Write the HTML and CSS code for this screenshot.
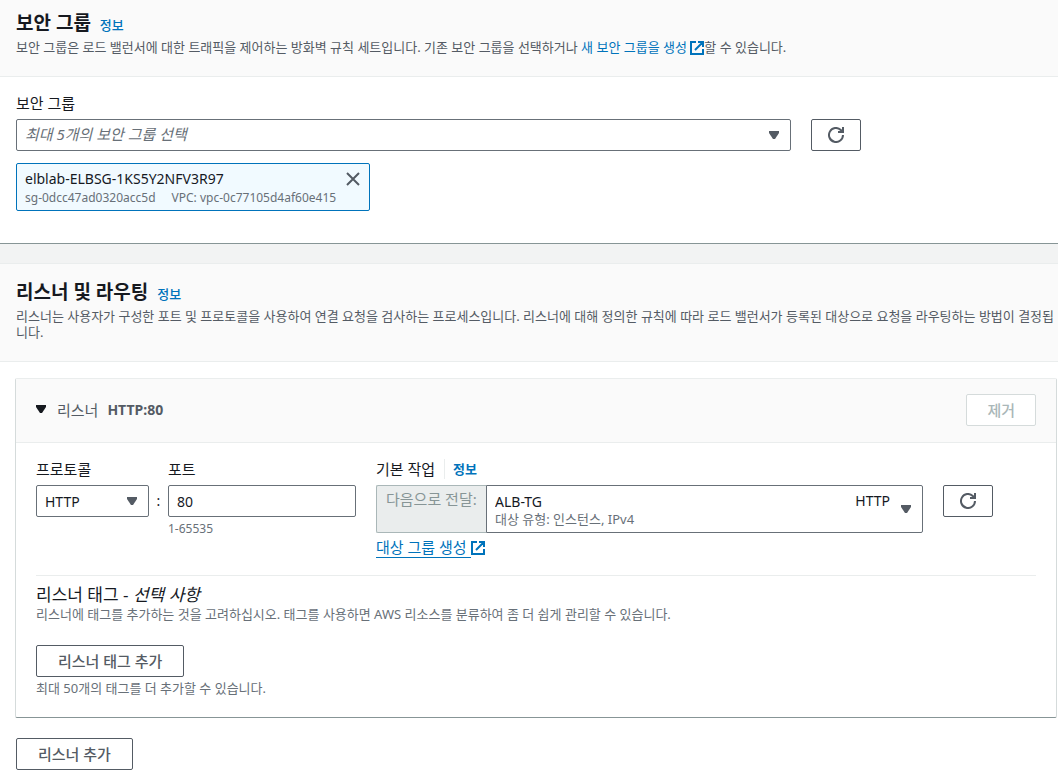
FILE: index.html
```html
<!DOCTYPE html>
<html lang="ko">
<head>
    <meta charset="UTF-8">
    <meta name="viewport" content="width=device-width, initial-scale=1.0">
    <title>로드 밸런서 생성</title>
    <link rel="stylesheet" href="styles.css">
</head>
<body>
    <!-- shared icons -->
    <svg class="sprite" aria-hidden="true">
        <symbol id="icon-caret" viewBox="0 0 10 8">
            <path d="M0 0h10v2L6 8H4L0 2z" fill="currentColor"/>
        </symbol>
        <symbol id="icon-refresh" viewBox="0 0 16 16">
            <path d="M15 8a7 7 0 1 1-2.2-5.1L15 5" fill="none" stroke="currentColor" stroke-width="2"/>
            <path d="M15 0v5h-5" fill="none" stroke="currentColor" stroke-width="2"/>
        </symbol>
        <symbol id="icon-external" viewBox="0 0 14 14">
            <path d="M6 1H1v12h12V8M8 1h5v5M13 1L5 9" fill="none" stroke="currentColor" stroke-width="2"/>
        </symbol>
        <symbol id="icon-close" viewBox="0 0 14 14">
            <path d="M1 1l12 12M13 1L1 13" fill="none" stroke="currentColor" stroke-width="2"/>
        </symbol>
    </svg>

    <section class="panel">
        <header class="panel-header">
            <h2>보안 그룹 <a href="#" class="info">정보</a></h2>
            <p>보안 그룹은 로드 밸런서에 대한 트래픽을 제어하는 방화벽 규칙 세트입니다. 기존 보안 그룹을 선택하거나 <a href="#">새 보안 그룹을 생성 <svg class="external"><use href="#icon-external"/></svg></a>할 수 있습니다.</p>
        </header>
        <div class="panel-body">
            <label for="security-group">보안 그룹</label>
            <div class="group-row">
                <div class="select">
                    <select id="security-group" class="placeholder">
                        <option>최대 5개의 보안 그룹 선택</option>
                    </select>
                    <svg class="caret"><use href="#icon-caret"/></svg>
                </div>
                <button type="button" class="btn btn-icon" aria-label="새로 고침"><svg><use href="#icon-refresh"/></svg></button>
            </div>
            <div class="token">
                <div>
                    <div class="token-name">elblab-ELBSG-1KS5Y2NFV3R97</div>
                    <div class="token-meta"><span>sg-0dcc47ad0320acc5d</span><span>VPC: vpc-0c77105d4af60e415</span></div>
                </div>
                <button type="button" class="token-close" aria-label="삭제"><svg><use href="#icon-close"/></svg></button>
            </div>
        </div>
    </section>

    <section class="panel panel-listeners">
        <header class="panel-header">
            <h2>리스너 및 라우팅 <a href="#" class="info">정보</a></h2>
            <p>리스너는 사용자가 구성한 포트 및 프로토콜을 사용하여 연결 요청을 검사하는 프로세스입니다. 리스너에 대해 정의한 규칙에 따라 로드 밸런서가 등록된 대상으로 요청을 라우팅하는 방법이 결정됩니다.</p>
        </header>

        <div class="listener">
            <div class="listener-header">
                <button type="button" class="toggle" aria-expanded="true">
                    <svg class="caret"><use href="#icon-caret"/></svg>
                    <span>리스너</span>
                    <strong>HTTP:80</strong>
                </button>
                <button type="button" class="btn" disabled>제거</button>
            </div>
            <div class="listener-body">
                <div class="fields">
                    <div class="field-protocol">
                        <label for="protocol">프로토콜</label>
                        <div class="select">
                            <select id="protocol">
                                <option>HTTP</option>
                            </select>
                            <svg class="caret"><use href="#icon-caret"/></svg>
                        </div>
                    </div>
                    <span class="colon">:</span>
                    <div class="field-port">
                        <label for="port">포트</label>
                        <input type="text" id="port" value="80">
                        <p class="hint">1-65535</p>
                    </div>
                    <div class="field-action">
                        <div class="label-row">
                            <label for="target-group">기본 작업</label>
                            <a href="#" class="info">정보</a>
                        </div>
                        <div class="forward">
                            <span class="forward-label">다음으로 전달:</span>
                            <div class="select select-target">
                                <select id="target-group">
                                    <option>ALB-TG</option>
                                </select>
                                <span class="target-type">대상 유형: 인스턴스, IPv4</span>
                                <span class="target-protocol">HTTP</span>
                                <svg class="caret"><use href="#icon-caret"/></svg>
                            </div>
                        </div>
                        <a href="#" class="create-link"><span>대상 그룹 생성&nbsp;</span><svg class="external"><use href="#icon-external"/></svg></a>
                    </div>
                    <button type="button" class="btn btn-icon" aria-label="새로 고침"><svg><use href="#icon-refresh"/></svg></button>
                </div>

                <div class="tags">
                    <h3>리스너 태그 - <em>선택 사항</em></h3>
                    <p class="hint">리스너에 태그를 추가하는 것을 고려하십시오. 태그를 사용하면 AWS 리소스를 분류하여 좀 더 쉽게 관리할 수 있습니다.</p>
                    <button type="button" class="btn btn-add">리스너 태그 추가</button>
                    <p class="hint">최대 50개의 태그를 더 추가할 수 있습니다.</p>
                </div>
            </div>
        </div>

        <div class="panel-actions">
            <button type="button" class="btn btn-add">리스너 추가</button>
        </div>
    </section>
</body>
</html>
```
FILE: styles.css
```css
* {
    box-sizing: border-box;
}

body {
    margin: 0;
    background: #fff;
    color: #16191f;
    font-family: "Noto Sans", "Noto Sans CJK KR", sans-serif;
    font-size: 14px;
    line-height: 20px;
}

h2, h3, p {
    margin: 0;
}

a {
    color: #0073bb;
    text-decoration: none;
}

button, input, select {
    font-family: inherit;
    font-size: 14px;
    color: inherit;
}

.sprite {
    display: none;
}

.caret {
    width: 10px;
    height: 8px;
}

.external {
    width: 14px;
    height: 14px;
    vertical-align: -3px;
}

/* panels */
.panel-header {
    padding: 12px 0 21px 16px;
    background: #fafafa;
    border-bottom: 1px solid #eaeded;
}

.panel-header h2 {
    margin-bottom: 4px;
    font-size: 19px;
    line-height: 23px;
}

.panel-header p {
    color: #545b64;
    font-size: 13px;
    line-height: 16px;
    word-break: break-all;
}

.info {
    font-size: 13px;
    font-weight: bold;
}

h2 .info {
    margin-left: 4px;
    font-weight: 500;
    line-height: 16px;
}

.panel-body {
    padding: 16px 16px 32px;
    border-bottom: 1px solid #879596;
}

.panel-listeners {
    border-top: 19px solid #f2f3f3;
    padding-bottom: 3px;
}

.panel-listeners .panel-header {
    padding-top: 17px;
    border-top: 1px solid #eaeded;
}

/* form controls */
label {
    display: block;
    margin-bottom: 6px;
    font-size: 15px;
}

.select {
    position: relative;
}

select, input {
    display: block;
    width: 100%;
    height: 32px;
    margin: 0;
    padding: 0 8px;
    background: #fff;
    border: 1px solid #687078;
    border-radius: 2px;
    appearance: none;
}

.placeholder {
    padding-bottom: 2px;
    color: #687078;
    font-size: 15px;
    font-style: italic;
}

.select .caret {
    position: absolute;
    top: 12px;
    right: 12px;
    color: #545b64;
    pointer-events: none;
}

.btn {
    height: 32px;
    padding: 0 20px 2px;
    background: #fff;
    border: 1px solid #545b64;
    border-radius: 2px;
    color: #545b64;
    font-size: 15px;
    font-weight: 500;
}

.btn:disabled {
    border-color: #d5dbdb;
    color: #aab7b8;
}

.btn-icon {
    display: flex;
    flex: none;
    align-items: center;
    justify-content: center;
    width: 50px;
    padding: 0;
}

.btn-icon svg {
    width: 16px;
    height: 16px;
}

.hint {
    color: #687078;
    font-size: 13px;
    line-height: 16px;
}

/* security group */
.group-row {
    display: flex;
    gap: 20px;
    max-width: 845px;
    margin-bottom: 12px;
}

.group-row .select {
    flex: 1;
}

.token {
    display: inline-flex;
    align-items: flex-start;
    gap: 9px;
    height: 48px;
    padding: 5px 8px;
    background: #f1faff;
    border: 1px solid #0073bb;
    border-radius: 2px;
    vertical-align: top;
}

.token-meta {
    display: flex;
    gap: 16px;
    color: #687078;
    font-size: 12px;
    line-height: 18px;
}

.token-close {
    display: flex;
    padding: 3px 1px;
    background: none;
    border: 0;
    color: #545b64;
}

.token-close svg {
    width: 14px;
    height: 14px;
}

/* listener card */
.listener {
    margin: 16px 1px 20px 15px;
    border: 1px solid #d5dbdb;
    border-top-color: #eaeded;
    border-bottom-color: #879596;
    border-radius: 2px;
}

.listener-header {
    display: flex;
    align-items: center;
    justify-content: space-between;
    padding: 15px 20px 16px;
    background: #fafafa;
    border-bottom: 1px solid #eaeded;
}

.toggle {
    display: flex;
    align-items: center;
    padding: 0 0 2px;
    background: none;
    border: 0;
    color: #545b64;
}

.toggle .caret {
    margin-right: 11px;
    color: #16191f;
}

.toggle span {
    margin-right: 9px;
    font-size: 15px;
}

.listener-body {
    padding: 16px 20px 21px;
}

.fields {
    display: flex;
    padding-bottom: 17px;
    border-bottom: 1px solid #eaeded;
}

.field-protocol {
    flex: 0 1 113px;
}

.colon {
    width: 19px;
    padding-top: 32px;
    text-align: center;
}

.field-port {
    flex: 0 1 188px;
    margin-right: 20px;
}

.field-port .hint {
    margin-top: 4px;
    font-size: 12px;
}

.field-action {
    flex: 0 1 547px;
    margin-right: 20px;
}

.label-row {
    display: flex;
    margin-bottom: 6px;
}

.label-row label {
    margin-bottom: 0;
    padding-right: 9px;
}

.label-row .info {
    padding-left: 8px;
    border-left: 1px solid #eaeded;
}

.forward {
    display: flex;
    margin-bottom: 5px;
}

.forward-label {
    flex: none;
    width: 110px;
    padding: 3px 0 0 9px;
    background: #eaeded;
    border: 1px solid #aab7b8;
    border-right: 0;
    border-radius: 2px 0 0 2px;
    color: #879596;
    font-size: 15px;
}

.select-target {
    flex: 1;
}

.select-target select {
    height: 48px;
    padding-bottom: 16px;
    border-radius: 0 2px 2px 0;
}

/* second line and protocol lie over the select box */
.target-type, .target-protocol {
    position: absolute;
    pointer-events: none;
}

.target-type {
    left: 9px;
    bottom: 6px;
    color: #687078;
    font-size: 13px;
    line-height: 16px;
}

.target-protocol {
    top: 6px;
    right: 33px;
}

.select-target .caret {
    top: 20px;
}

.create-link {
    display: inline-flex;
    align-items: center;
    font-size: 15px;
}

.create-link span {
    border-bottom: 1px solid #0073bb;
    line-height: 19px;
}

.fields > .btn-icon {
    margin-top: 26px;
}

.tags h3 {
    padding-top: 7px;
    font-size: 17px;
    font-weight: normal;
    line-height: 23px;
}

.btn-add {
    padding: 0 21px 2px;
}

.tags .btn {
    margin: 23px 0 3px;
}

.panel-actions {
    display: flex;
    padding-left: 16px;
}
```
